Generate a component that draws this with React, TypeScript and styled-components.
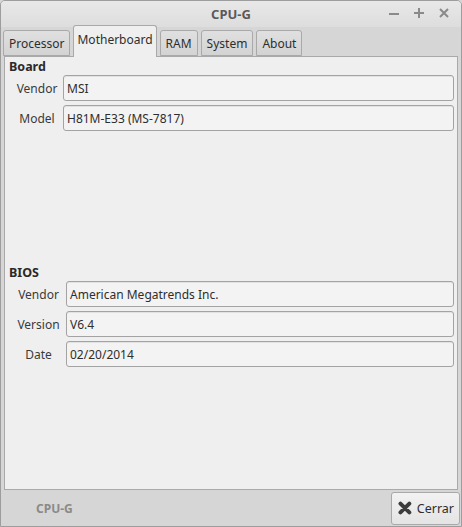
import * as React from "react";
import styled, { createGlobalStyle } from "styled-components";

const GlobalStyle = createGlobalStyle`
  html, body {
    margin: 0;
    padding: 0;
    background: #d6d6d6;
  }
  body {
    font-family: "Noto Sans", "Open Sans", sans-serif;
    font-size: 12px;
    color: #2e2e2e;
  }
`;

const Window = styled.div`
  width: 462px;
  height: 527px;
  box-sizing: border-box;
  border: 1px solid #9d9d9d;
  border-radius: 5px 5px 0 0;
  background: #d6d6d6;
  display: flex;
  flex-direction: column;
  overflow: hidden;
`;

const TitleBar = styled.div`
  height: 26px;
  flex: none;
  position: relative;
  display: flex;
  align-items: center;
  justify-content: center;
  background: linear-gradient(#e8e8e8, #dddddd);
`;

const Title = styled.div`
  font-weight: bold;
  color: #5a5a5a;
  font-size: 13px;
`;

const WindowButtons = styled.div`
  position: absolute;
  right: 10px;
  top: 5px;
  display: flex;
  gap: 11px;
`;

const WinButton = styled.span`
  width: 14px;
  height: 14px;
  display: flex;
  align-items: center;
  justify-content: center;
`;

const Body = styled.div`
  flex: 1;
  display: flex;
  flex-direction: column;
  padding: 0 2px;
`;

const TabRow = styled.div`
  display: flex;
  align-items: flex-end;
  gap: 3px;
  padding-left: 0;
  height: 29px;
  flex: none;
  position: relative;
  z-index: 1;
`;

const Tab = styled.div<{ $active?: boolean }>`
  box-sizing: border-box;
  height: ${({ $active }) => ($active ? "32px" : "26px")};
  margin-bottom: ${({ $active }) => ($active ? "-1px" : "0")};
  padding: ${({ $active }) => ($active ? "0 3px 5px" : "0 5px")};
  display: flex;
  align-items: center;
  border: 1px solid #a9a9a9;
  border-bottom: ${({ $active }) => ($active ? "none" : "1px solid #a9a9a9")};
  border-radius: 3px 3px 0 0;
  background: ${({ $active }) =>
    $active ? "#efefef" : "linear-gradient(#e0e0e0, #d3d3d3)"};
  color: #2e2e2e;
`;

const Panel = styled.div`
  flex: 1;
  box-sizing: border-box;
  margin-left: 1px;
  margin-right: 1px;
  border: 1px solid #a9a9a9;
  background: #efefef;
  display: flex;
  flex-direction: column;
  padding: 1px 3px 0 4px;
`;

const Section = styled.div<{ $grow?: boolean }>`
  display: flex;
  flex-direction: column;
  flex: ${({ $grow }) => ($grow ? 1 : "none")};
`;

const SectionTitle = styled.div`
  font-weight: bold;
  font-size: 12.5px;
  line-height: 17px;
  color: #2a2a2a;
`;

const FieldGrid = styled.div<{ $labelWidth: number }>`
  display: grid;
  grid-template-columns: ${({ $labelWidth }) => `${$labelWidth}px`} 1fr;
  column-gap: 5px;
  row-gap: 4px;
  align-items: center;
`;

const Label = styled.div`
  text-align: center;
  padding-left: 7px;
  color: #3a3a3a;
`;

const Entry = styled.div`
  box-sizing: border-box;
  height: 26px;
  border: 1px solid #a3a3a3;
  border-radius: 3px;
  background: #f3f3f3;
  box-shadow: inset 0 1px 0 #e2e2e2;
  display: flex;
  align-items: center;
  padding-left: 3px;
  color: #2e2e2e;
`;

const Footer = styled.div`
  height: 36px;
  flex: none;
  display: flex;
  align-items: center;
  justify-content: space-between;
  padding: 0 1px 0 35px;
`;

const FooterBrand = styled.div`
  font-weight: bold;
  color: #8a8a8a;
`;

const CloseButton = styled.button`
  box-sizing: border-box;
  height: 33px;
  width: 69px;
  border: 1px solid #a9a9a9;
  border-radius: 3px;
  background: linear-gradient(#f2f2f2, #e4e4e4);
  display: flex;
  align-items: center;
  gap: 4px;
  padding: 0 5px;
  font: inherit;
  font-size: 12.5px;
  color: #2e2e2e;
`;

type Field = { label: string; value: string };

const board: Field[] = [
  { label: "Vendor", value: "MSI" },
  { label: "Model", value: "H81M-E33 (MS-7817)" },
];

const bios: Field[] = [
  { label: "Vendor", value: "American Megatrends Inc." },
  { label: "Version", value: "V6.4" },
  { label: "Date", value: "02/20/2014" },
];

const tabs = ["Processor", "Motherboard", "RAM", "System", "About"];

const Fields: React.FC<{ fields: Field[]; labelWidth: number }> = ({
  fields,
  labelWidth,
}) => (
  <FieldGrid $labelWidth={labelWidth}>
    {fields.map(f => (
      <React.Fragment key={f.label}>
        <Label>{f.label}</Label>
        <Entry>{f.value}</Entry>
      </React.Fragment>
    ))}
  </FieldGrid>
);

const App: React.FC = () => {
  return (
    <>
      <GlobalStyle />
      <Window>
        <TitleBar>
          <Title>CPU-G</Title>
          <WindowButtons>
            <WinButton>
              <svg width="12" height="12" viewBox="0 0 12 12">
                <path d="M1 7h10" stroke="#8a8a8a" strokeWidth="2" />
              </svg>
            </WinButton>
            <WinButton>
              <svg width="12" height="12" viewBox="0 0 12 12">
                <path d="M1 6h10M6 1v10" stroke="#8a8a8a" strokeWidth="2" />
              </svg>
            </WinButton>
            <WinButton>
              <svg width="12" height="12" viewBox="0 0 12 12">
                <path d="M2 2l8 8M10 2l-8 8" stroke="#8a8a8a" strokeWidth="2" />
              </svg>
            </WinButton>
          </WindowButtons>
        </TitleBar>
        <Body>
          <TabRow>
            {tabs.map(t => (
              <Tab key={t} $active={t === "Motherboard"}>
                {t}
              </Tab>
            ))}
          </TabRow>
          <Panel>
            <Section $grow>
              <SectionTitle>Board</SectionTitle>
              <Fields fields={board} labelWidth={49} />
            </Section>
            <Section>
              <SectionTitle>BIOS</SectionTitle>
              <Fields fields={bios} labelWidth={52} />
            </Section>
            <div style={{ height: 122 }} />
          </Panel>
        </Body>
        <Footer>
          <FooterBrand>CPU-G</FooterBrand>
          <CloseButton>
            <svg width="16" height="16" viewBox="0 0 16 16">
              <path
                d="M3.5 3.5l9 9M12.5 3.5l-9 9"
                stroke="#3c3c3c"
                strokeWidth="4"
                strokeLinecap="round"
              />
            </svg>
            Cerrar
          </CloseButton>
        </Footer>
      </Window>
    </>
  );
};

export default App;
